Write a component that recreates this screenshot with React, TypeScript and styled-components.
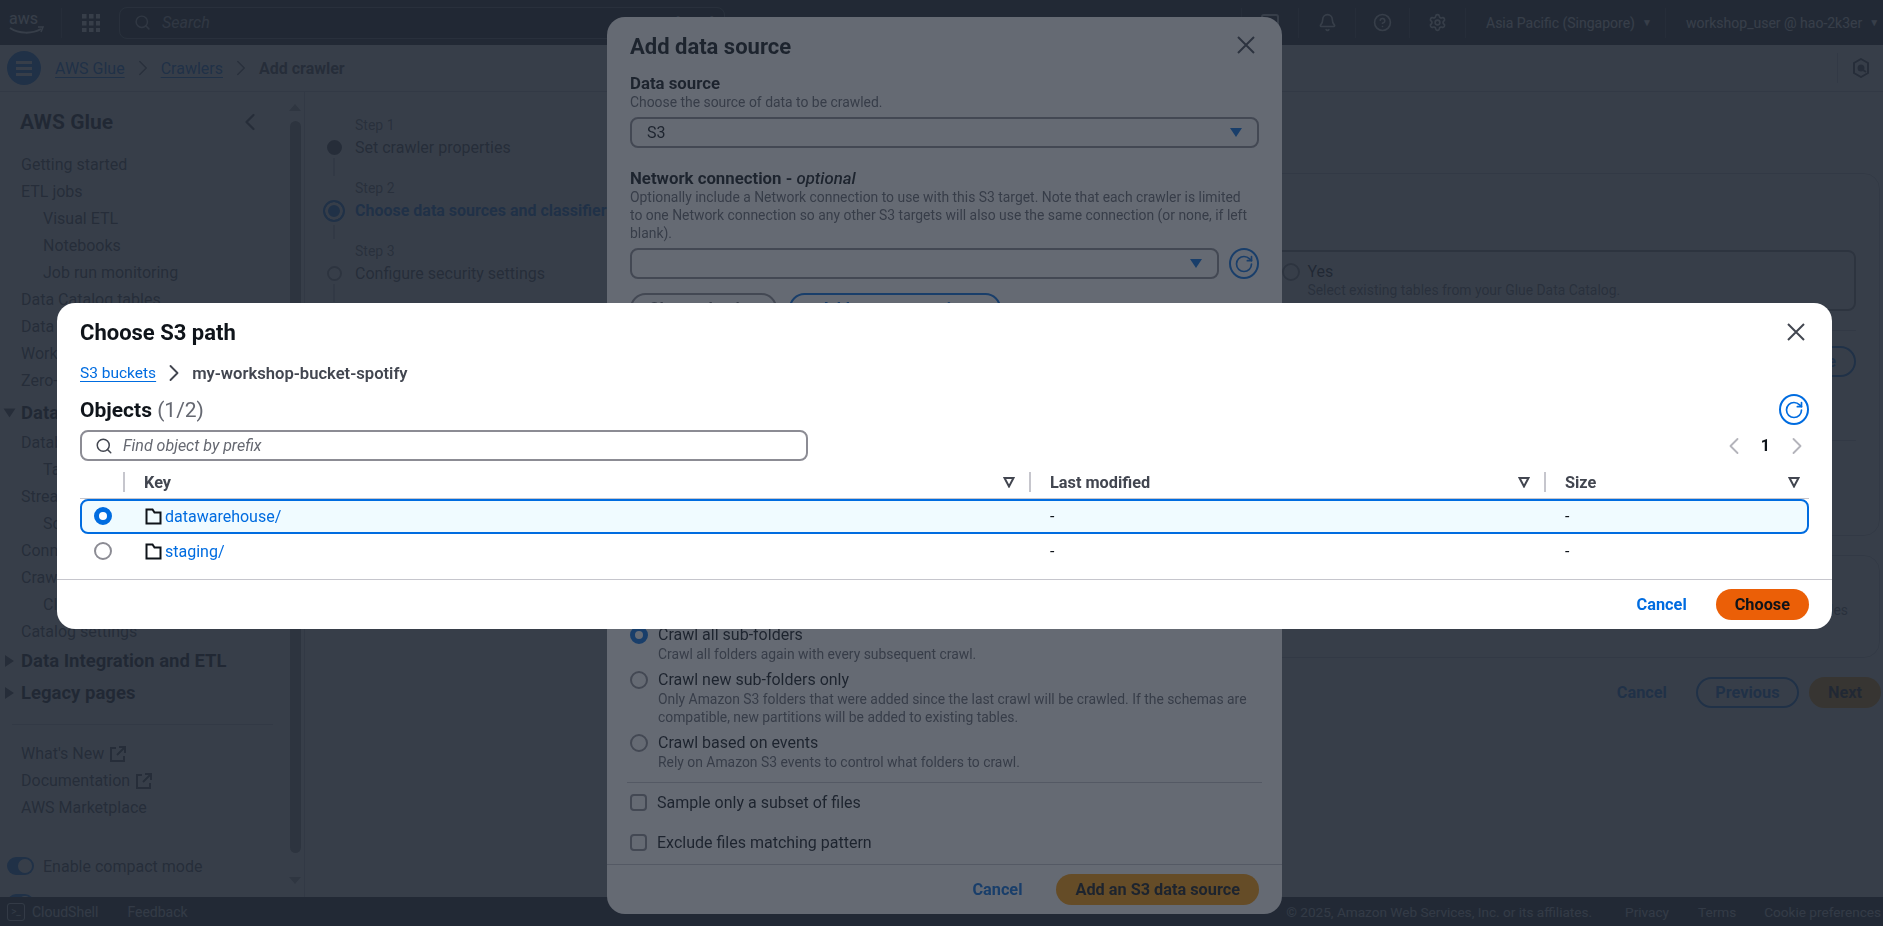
import React from "react";
import styled, { createGlobalStyle } from "styled-components";
import { Bell, ChevronLeft, ChevronRight, CircleHelp, RotateCw, Search, Settings } from "lucide-react";

const FONT = `"Roboto", "Noto Sans", "Liberation Sans", sans-serif`;

const GlobalStyle = createGlobalStyle`
  html, body {
    margin: 0;
    height: 100%;
    overflow: hidden;
    background: #ffffff;
    font-family: ${FONT};
    font-size: 16px;
    color: #0f141a;
  }
  * { box-sizing: border-box; }
`;

/* ---------- page behind the dialogs ---------- */

const Page = styled.div`
  display: flex;
  flex-direction: column;
  height: 100vh;
`;

const TopNav = styled.header`
  display: flex;
  align-items: center;
  flex: 0 0 45px;
  background: #161d26;
  color: #ffffff;
`;

const LogoBox = styled.div`
  flex: 0 0 62px;
  height: 30px;
  padding-left: 9px;
  border-right: 1px solid #424650;
  display: flex;
  align-items: center;
`;

const GridBox = styled.div`
  flex: 0 0 57px;
  display: flex;
  justify-content: center;
`;

const SearchBar = styled.div`
  flex: 0 0 606px;
  height: 32px;
  display: flex;
  align-items: center;
  gap: 11px;
  padding: 0 10px 0 14px;
  border: 1px solid #656871;
  border-radius: 8px;
  background: #0f141a;
  font-style: italic;
  color: #b4b4bb;
`;

const SearchHint = styled.span`
  margin-left: auto;
  font-style: normal;
  font-size: 13px;
`;

const NavSpacer = styled.div`
  flex: 1;
`;

const NavAction = styled.div<{ $width: number }>`
  flex: 0 0 ${(p) => p.$width}px;
  height: 30px;
  display: flex;
  align-items: center;
  justify-content: center;
  border-left: 1px solid #424650;
  color: #ffffff;
`;

const NavMenu = styled(NavAction)`
  justify-content: flex-start;
  gap: 7px;
  padding-left: 20px;
  font-size: 14px;
  white-space: nowrap;
`;

const NavCaret = styled.span`
  font-size: 10px;
`;

const ShellGlyph = styled.span`
  width: 18px;
  height: 18px;
  border: 2px solid #ffffff;
  border-radius: 3px;
`;

const CrumbBar = styled.div`
  flex: 0 0 47px;
  display: flex;
  align-items: center;
  padding: 0 0 0 7px;
  background: #ffffff;
  border-bottom: 1px solid #c6c6cd;
`;

const MenuButton = styled.div`
  width: 34px;
  height: 34px;
  border-radius: 50%;
  background: #006ce0;
  display: flex;
  flex-direction: column;
  align-items: center;
  justify-content: center;
  gap: 3px;
  margin-right: 14px;
`;

const MenuLine = styled.span`
  width: 16px;
  height: 3px;
  background: #ffffff;
`;

const Crumb = styled.span<{ $current?: boolean }>`
  font-weight: ${(p) => (p.$current ? 700 : 400)};
  color: ${(p) => (p.$current ? "#424650" : "#006ce0")};
  text-decoration: ${(p) => (p.$current ? "none" : "underline")};
  text-underline-offset: 3px;
`;

const CrumbChevron = styled(ChevronRight)`
  margin: 0 5px;
  color: #656871;
`;

const PrefBox = styled.div`
  margin-left: auto;
  flex: 0 0 46px;
  height: 30px;
  border-left: 1px solid #c6c6cd;
  display: flex;
  align-items: center;
  justify-content: center;
`;

const Body = styled.div`
  flex: 1;
  min-height: 0;
  display: flex;
  overflow: hidden;
`;

const Sidebar = styled.aside`
  flex: 0 0 305px;
  display: flex;
  border-right: 1px solid #c6c6cd;
  overflow: hidden;
`;

const SideScroll = styled.nav`
  flex: 0 0 289px;
  padding-top: 15px;
`;

const SideHead = styled.div`
  height: 30px;
  margin-bottom: 14px;
  padding: 0 25px 0 20px;
  display: flex;
  align-items: center;
  justify-content: space-between;
  font-size: 21px;
  font-weight: 700;
  color: #0f141a;
`;

const SideItem = styled.div<{ $level?: number }>`
  height: 27px;
  line-height: 27px;
  white-space: nowrap;
  padding-left: ${(p) => 21 + (p.$level ?? 0) * 22}px;
  color: #424650;
`;

const SideSection = styled.div<{ $gap?: number }>`
  height: 32px;
  margin-top: ${(p) => p.$gap ?? 0}px;
  display: flex;
  align-items: center;
  gap: 7px;
  padding-left: 5px;
  font-size: 18.5px;
  font-weight: 700;
  color: #0f141a;
`;

const SectionCaret = styled.span<{ $open?: boolean }>`
  width: 0;
  height: 0;
  border-left: 9px solid #424650;
  border-top: 6px solid transparent;
  border-bottom: 6px solid transparent;
  transform: ${(p) => (p.$open ? "rotate(90deg)" : "none")};
`;

const SideDivider = styled.hr`
  margin: 15px 16px 15px 12px;
  border: 0;
  border-top: 1px solid #c6c6cd;
`;

const SideLink = styled(SideItem)`
  display: flex;
  align-items: center;
  gap: 6px;
`;

const ToggleRow = styled.div<{ $gap?: number }>`
  height: 32px;
  margin-top: ${(p) => p.$gap ?? 0}px;
  display: flex;
  align-items: center;
  gap: 9px;
  padding-left: 7px;
  color: #424650;
`;

const Toggle = styled.span`
  width: 27px;
  height: 18px;
  padding: 2px;
  border-radius: 9px;
  background: #006ce0;
  display: flex;
  justify-content: flex-end;
`;

const ToggleKnob = styled.span`
  width: 14px;
  height: 14px;
  border-radius: 50%;
  background: #ffffff;
`;

const ScrollTrack = styled.div`
  flex: 0 0 11px;
  display: flex;
  flex-direction: column;
  align-items: center;
  padding-top: 12px;
`;

const ScrollArrow = styled.span<{ $down?: boolean }>`
  width: 0;
  height: 0;
  border-left: 6px solid transparent;
  border-right: 6px solid transparent;
  ${(p) => (p.$down ? "border-top: 7px solid #a0a0a0;" : "border-bottom: 7px solid #a0a0a0;")}
`;

const ScrollThumb = styled.span`
  width: 11px;
  height: 732px;
  margin: 10px 0 24px;
  border-radius: 6px;
  background: #8f8f8f;
`;

const Main = styled.main`
  flex: 1;
  min-width: 0;
  display: flex;
`;

const Steps = styled.ol`
  flex: 0 0 322px;
  list-style: none;
  margin: 0;
  padding: 21px 0 0 18px;
`;

const Step = styled.li`
  display: grid;
  grid-template-columns: 22px 1fr;
  grid-template-rows: 23px 40px;
  column-gap: 10px;
`;

const StepLabel = styled.div`
  grid-column: 2;
  padding-top: 1px;
  font-size: 14px;
  color: #656871;
  line-height: 23px;
`;

const StepMarker = styled.div`
  grid-column: 1;
  grid-row: 2;
  display: flex;
  flex-direction: column;
  align-items: center;
`;

const StepDot = styled.span<{ $state: "done" | "active" | "todo" }>`
  flex: none;
  border-radius: 50%;
  width: ${(p) => (p.$state === "active" ? 22 : 15)}px;
  height: ${(p) => (p.$state === "active" ? 22 : 15)}px;
  margin-top: ${(p) => (p.$state === "active" ? 1 : 4)}px;
  background: ${(p) => (p.$state === "done" ? "#424650" : p.$state === "active" ? "#006ce0" : "#ffffff")};
  border: 2px solid ${(p) => (p.$state === "todo" ? "#8c8c94" : p.$state === "active" ? "#006ce0" : "#424650")};
  box-shadow: ${(p) => (p.$state === "active" ? "inset 0 0 0 3px #ffffff" : "none")};
`;

const StepLine = styled.span`
  flex: 1;
  width: 2px;
  margin-top: 3px;
  background: #c6c6cd;
`;

const StepTitle = styled.div<{ $active?: boolean }>`
  grid-column: 2;
  grid-row: 2;
  white-space: nowrap;
  line-height: 23px;
  font-weight: ${(p) => (p.$active ? 700 : 400)};
  color: ${(p) => (p.$active ? "#006ce0" : "#424650")};
`;

const Content = styled.div`
  flex: 1;
  min-width: 0;
  padding: 81px 2px 0 0;
`;

const Card = styled.section<{ $height: number }>`
  height: ${(p) => p.$height}px;
  margin: 0 1px 19px 0;
  padding: 76px 23px 0;
  border: 1px solid #c6c6cd;
  border-radius: 16px;
`;

const TileRow = styled.div`
  display: grid;
  grid-template-columns: 1fr 1fr;
  gap: 16px;
  padding-bottom: 19px;
  border-bottom: 1px solid #c6c6cd;
`;

const Tile = styled.div`
  height: 61px;
  padding: 10px 18px;
  display: grid;
  grid-template-columns: 18px 1fr;
  column-gap: 8px;
  border: 2px solid #8c8c94;
  border-radius: 8px;
`;

const TileRadio = styled.span`
  width: 18px;
  height: 18px;
  margin-top: 1px;
  border-radius: 50%;
  border: 2px solid #8c8c94;
`;

const TileHint = styled.div`
  grid-column: 2;
  font-size: 13.9px;
  color: #656871;
`;

const SourceRow = styled.div`
  display: flex;
  justify-content: flex-end;
  padding: 15px 0 63px;
  border-bottom: 1px solid #c6c6cd;
`;

const OutlineButton = styled.button<{ $muted?: boolean }>`
  height: 31px;
  padding: 0 18px;
  border: 2px solid ${(p) => (p.$muted ? "#8c8c94" : "#006ce0")};
  border-radius: 16px;
  background: #ffffff;
  color: ${(p) => (p.$muted ? "#656871" : "#006ce0")};
  font: 700 16.3px ${FONT};
  white-space: nowrap;
`;

const CardNote = styled.p`
  margin: -30px 0 0;
  font-size: 13.9px;
  color: #656871;
  text-align: right;
  padding-right: 8px;
`;

const Actions = styled.div`
  display: flex;
  justify-content: flex-end;
  align-items: center;
  margin-top: 19px;
`;

const PrevButton = styled(OutlineButton)`
  width: 103px;
  margin: 0 10px 0 29px;
  padding: 0;
`;

const LinkButton = styled.button`
  border: 0;
  background: none;
  padding: 0;
  font: 700 16.3px ${FONT};
  color: #006ce0;
`;

const SolidButton = styled.button<{ $color: string }>`
  height: 31px;
  padding: 0 19px;
  border: 0;
  border-radius: 16px;
  background: ${(p) => p.$color};
  color: #0f141a;
  font: 700 16.3px ${FONT};
`;

const Footer = styled.footer`
  flex: 0 0 29px;
  display: flex;
  align-items: center;
  padding: 0 2px 0 7px;
  background: #161d26;
  color: #d1d5db;
  font-size: 14px;
`;

const ShellBox = styled.span`
  width: 18px;
  height: 18px;
  border: 1px solid #d1d5db;
  border-radius: 3px;
  display: flex;
  align-items: center;
  justify-content: center;
  font-size: 10px;
  margin-right: 7px;
`;

const FooterLink = styled.span<{ $gap: number }>`
  margin-left: ${(p) => p.$gap}px;
  white-space: nowrap;
`;

const FooterLegal = styled(FooterLink)`
  font-size: 13.6px;
`;

/* ---------- dialogs ---------- */

const Backdrop = styled.div<{ $layer: number }>`
  position: fixed;
  inset: 0;
  z-index: ${(p) => p.$layer};
  background: rgba(35, 43, 55, 0.7);
`;

const Dialog = styled.div<{ $layer: number; $left: number; $top: number; $width: number; $height: number }>`
  position: fixed;
  z-index: ${(p) => p.$layer};
  left: ${(p) => p.$left}px;
  top: ${(p) => p.$top}px;
  width: ${(p) => p.$width}px;
  height: ${(p) => p.$height}px;
  background: #ffffff;
  border-radius: 18px;
  display: flex;
  flex-direction: column;
  overflow: hidden;
`;

const DialogHead = styled.div<{ $height: number }>`
  flex: 0 0 ${(p) => p.$height}px;
  display: flex;
  align-items: center;
  justify-content: space-between;
  padding: 0 27px 0 23px;
`;

const DialogTitle = styled.h2`
  margin: 2px 0 0;
  font-size: 22px;
  font-weight: 700;
  color: #0f141a;
`;

const CloseIcon = () => (
  <svg width="18" height="18" viewBox="0 0 18 18" fill="none" stroke="#424650" strokeWidth="2">
    <path d="M1 1l16 16M17 1L1 17" />
  </svg>
);

const AddBody = styled.div`
  flex: 1;
  min-height: 0;
  padding: 0 23px;
  display: flex;
  flex-direction: column;
`;

const FieldLabel = styled.label<{ $top?: number }>`
  display: block;
  margin-top: ${(p) => p.$top ?? 0}px;
  font-size: 16.8px;
  font-weight: 700;
  line-height: 20px;
  color: #0f141a;
`;

const Optional = styled.i`
  font-weight: 500;
`;

const FieldHint = styled.div`
  font-size: 13.9px;
  line-height: 18px;
  color: #656871;
`;

const NetworkHint = styled(FieldHint)`
  padding-right: 7px;
`;

const FieldRow = styled.div`
  display: flex;
  gap: 10px;
  margin-top: 6px;
`;

const SelectBox = styled.div`
  flex: 1;
  height: 31px;
  padding: 0 15px;
  display: flex;
  align-items: center;
  justify-content: space-between;
  border: 2px solid #8c8c94;
  border-radius: 8px;
  color: #0f141a;
`;

const SelectCaret = styled.span`
  width: 0;
  height: 0;
  border-top: 9px solid #006ce0;
  border-left: 6px solid transparent;
  border-right: 6px solid transparent;
`;

const RefreshButton = styled.button`
  flex: 0 0 30px;
  height: 31px;
  padding: 0;
  border: 2px solid #006ce0;
  border-radius: 50%;
  background: #ffffff;
  color: #006ce0;
  display: flex;
  align-items: center;
  justify-content: center;
`;

const ConnButtons = styled.div`
  display: flex;
  gap: 12px;
  margin-top: 14px;
`;

const ClearButton = styled(OutlineButton)`
  width: 147px;
  padding: 0;
`;

const ConnectButton = styled(OutlineButton)`
  width: 212px;
  padding: 0;
`;

const HiddenFields = styled.div`
  flex: 0 0 301px;
  padding-top: 20px;
`;

const RadioRow = styled.div<{ $height: number }>`
  flex: 0 0 ${(p) => p.$height}px;
  display: grid;
  grid-template-columns: 19px 1fr;
  grid-auto-rows: min-content;
  column-gap: 9px;
`;

const Radio = styled.span<{ $on?: boolean }>`
  width: 18px;
  height: 18px;
  margin-top: 1px;
  border-radius: 50%;
  background: #ffffff;
  border: ${(p) => (p.$on ? "5px solid #006ce0" : "2px solid #8c8c94")};
`;

const RadioText = styled.div`
  line-height: 20px;
  color: #0f141a;
`;

const RadioHint = styled(FieldHint)`
  grid-column: 2;
`;

const Rule = styled.hr`
  flex: none;
  width: calc(100% + 6px);
  margin: 9px -3px 0;
  border: 0;
  border-top: 1px solid #c6c6cd;
`;

const CheckRow = styled.div<{ $top: number }>`
  display: flex;
  align-items: center;
  gap: 10px;
  margin-top: ${(p) => p.$top}px;
  flex: 0 0 20px;
  color: #0f141a;
`;

const CheckBox = styled.span`
  width: 17px;
  height: 17px;
  border: 2px solid #8c8c94;
  border-radius: 4px;
`;

const DialogFoot = styled.div<{ $gap: number }>`
  flex: 0 0 50px;
  display: flex;
  align-items: center;
  justify-content: flex-end;
  gap: ${(p) => p.$gap}px;
  padding: 0 23px;
  border-top: 1px solid #c6c6cd;
`;

const PathBody = styled.div`
  flex: 1;
  padding: 0 23px;
  min-height: 0;
`;

const PathCrumbs = styled.div`
  display: flex;
  align-items: center;
  height: 26px;
  font-size: 15.5px;
`;

const PathChevron = styled(ChevronRight)`
  margin: 0 4px;
  color: #424650;
`;

const CrumbLink = styled.a`
  color: #006ce0;
  text-decoration: underline;
  text-underline-offset: 3px;
`;

const CrumbNow = styled.span`
  color: #424650;
  font-size: 16.6px;
  font-weight: 600;
`;

const ObjectsHead = styled.div`
  display: flex;
  align-items: center;
  justify-content: space-between;
  height: 31px;
  margin-top: 8px;
`;

const ObjectsTitle = styled.h3`
  margin: 0;
  font-size: 21px;
  font-weight: 700;
  color: #0f141a;
`;

const Count = styled.span`
  font-weight: 400;
  color: #656871;
`;

const FilterRow = styled.div`
  display: flex;
  align-items: center;
  justify-content: space-between;
  margin-top: 5px;
`;

const FilterInput = styled.div`
  width: 728px;
  height: 31px;
  display: flex;
  align-items: center;
  gap: 10px;
  padding-left: 13px;
  border: 2px solid #8c8c94;
  border-radius: 8px;
  font-style: italic;
  color: #656871;
`;

const Pager = styled.div`
  display: flex;
  align-items: center;
  gap: 13px;
  margin-right: -2px;
  font-weight: 700;
  color: #0f141a;
`;

const TableHead = styled.div`
  display: grid;
  grid-template-columns: 43px 906px 515px 1fr;
  height: 28px;
  margin-top: 10px;
  border-bottom: 1px solid #c6c6cd;
`;

const HeadCell = styled.div<{ $rule?: boolean }>`
  height: 20px;
  margin-top: 1px;
  padding: 0 14px 0 19px;
  display: flex;
  align-items: center;
  justify-content: space-between;
  border-left: ${(p) => (p.$rule ? "2px solid #c6c6cd" : "0")};
  font-size: 16.3px;
  font-weight: 700;
  color: #424650;

  &:last-child {
    padding-right: 9px;
  }
`;

const SortIcon = () => (
  <svg width="12" height="12" viewBox="0 0 12 12" fill="none" stroke="#424650" strokeWidth="2">
    <path d="M1.5 2h9L6 10.5z" />
  </svg>
);

const Row = styled.div<{ $selected?: boolean }>`
  display: grid;
  grid-template-columns: 43px 906px 515px 1fr;
  align-items: center;
  height: 35px;
  border: 2px solid ${(p) => (p.$selected ? "#006ce0" : "transparent")};
  border-radius: 8px;
  background: ${(p) => (p.$selected ? "#f0fbff" : "#ffffff")};
  color: #0f141a;
`;

const RowRadio = styled(Radio)`
  margin: -2px 0 0 12px;
`;

const KeyCell = styled.div`
  display: flex;
  align-items: center;
  gap: 3px;
  padding-left: 20px;
`;

const KeyLink = styled.a`
  color: #006ce0;
`;

const ValueCell = styled.div`
  padding-left: 19px;
`;

const FolderIcon = () => (
  <svg width="17" height="17" viewBox="0 0 17 17" fill="none" stroke="#0f141a" strokeWidth="2">
    <path d="M1.5 15.5V1.5h6l2 3h6v11z" />
  </svg>
);

const ExternalIcon = () => (
  <svg width="16" height="16" viewBox="0 0 16 16" fill="none" stroke="#424650" strokeWidth="2">
    <path d="M6 2H1v13h13v-5M9 1h6v6M15 1L7 9" />
  </svg>
);

const AwsLogo = () => (
  <svg width="36" height="26" viewBox="0 0 36 26">
    <text x="0" y="14" fontFamily="Roboto, sans-serif" fontSize="16" fill="#ffffff">
      aws
    </text>
    <path d="M1 18c9 6 22 6 31 1" fill="none" stroke="#ffffff" strokeWidth="2" />
    <path d="M29 17l5 0-2 5" fill="none" stroke="#ffffff" strokeWidth="1.5" />
  </svg>
);

const GridIcon = () => (
  <svg width="18" height="18" viewBox="0 0 18 18" fill="#ffffff">
    {[0, 7, 14].flatMap((y) => [0, 7, 14].map((x) => <rect key={`${x}-${y}`} x={x} y={y} width="4.5" height="4.5" />))}
  </svg>
);

const PrefIcon = () => (
  <svg width="16" height="20" viewBox="0 0 16 20" fill="none" stroke="#424650" strokeWidth="2">
    <path d="M8 1l7 4v10l-7 4-7-4V5z" />
    <circle cx="8" cy="10" r="2.5" fill="#424650" />
    <path d="M10 12l3 2" />
  </svg>
);

const mainNav: Array<[string, number]> = [
  ["Getting started", 0],
  ["ETL jobs", 0],
  ["Visual ETL", 1],
  ["Notebooks", 1],
  ["Job run monitoring", 1],
  ["Data Catalog tables", 0],
  ["Data connections", 0],
  ["Workflows (orchestration)", 0],
  ["Zero-ETL integrations", 0],
];

const catalogNav: Array<[string, number]> = [
  ["Databases", 0],
  ["Tables", 1],
  ["Stream schema registries", 0],
  ["Schemas", 1],
  ["Connections", 0],
  ["Crawlers", 0],
  ["Classifiers", 1],
  ["Catalog settings", 0],
];

const App = () => {
  return (
    <>
      <GlobalStyle />
      <Page>
        <TopNav>
          <LogoBox>
            <AwsLogo />
          </LogoBox>
          <GridBox>
            <GridIcon />
          </GridBox>
          <SearchBar>
            <Search size={17} />
            Search
            <SearchHint>[Alt+S]</SearchHint>
          </SearchBar>
          <NavSpacer />
          <NavAction $width={57}>
            <ShellGlyph />
          </NavAction>
          <NavAction $width={57}>
            <Bell size={19} />
          </NavAction>
          <NavAction $width={54}>
            <CircleHelp size={19} />
          </NavAction>
          <NavAction $width={56}>
            <Settings size={19} />
          </NavAction>
          <NavMenu $width={200}>
            Asia Pacific (Singapore) <NavCaret>▼</NavCaret>
          </NavMenu>
          <NavMenu $width={218}>
            workshop_user @ hao-2k3er <NavCaret>▼</NavCaret>
          </NavMenu>
        </TopNav>

        <CrumbBar>
          <MenuButton>
            <MenuLine />
            <MenuLine />
            <MenuLine />
          </MenuButton>
          <Crumb>AWS Glue</Crumb>
          <CrumbChevron size={26} strokeWidth={1.5} />
          <Crumb>Crawlers</Crumb>
          <CrumbChevron size={26} strokeWidth={1.5} />
          <Crumb $current>Add crawler</Crumb>
          <PrefBox>
            <PrefIcon />
          </PrefBox>
        </CrumbBar>

        <Body>
          <Sidebar>
            <SideScroll>
              <SideHead>
                AWS Glue
                <ChevronLeft size={28} color="#424650" />
              </SideHead>
              {mainNav.map(([label, level]) => (
                <SideItem key={label} $level={level}>
                  {label}
                </SideItem>
              ))}
              <SideSection $gap={3}>
                <SectionCaret $open />
                Data Catalog
              </SideSection>
              {catalogNav.map(([label, level]) => (
                <SideItem key={label} $level={level}>
                  {label}
                </SideItem>
              ))}
              <SideSection>
                <SectionCaret />
                Data Integration and ETL
              </SideSection>
              <SideSection>
                <SectionCaret />
                Legacy pages
              </SideSection>
              <SideDivider />
              <SideLink>
                What's New <ExternalIcon />
              </SideLink>
              <SideLink>
                Documentation <ExternalIcon />
              </SideLink>
              <SideItem>AWS Marketplace</SideItem>
              <ToggleRow $gap={29}>
                <Toggle>
                  <ToggleKnob />
                </Toggle>
                Enable compact mode
              </ToggleRow>
              <ToggleRow $gap={5}>
                <Toggle>
                  <ToggleKnob />
                </Toggle>
                Enable beta navigation
              </ToggleRow>
            </SideScroll>
            <ScrollTrack>
              <ScrollArrow />
              <ScrollThumb />
              <ScrollArrow $down />
            </ScrollTrack>
          </Sidebar>

          <Main>
            <Steps>
              <Step>
                <StepLabel>Step 1</StepLabel>
                <StepMarker>
                  <StepDot $state="done" />
                  <StepLine />
                </StepMarker>
                <StepTitle>Set crawler properties</StepTitle>
              </Step>
              <Step>
                <StepLabel>Step 2</StepLabel>
                <StepMarker>
                  <StepDot $state="active" />
                  <StepLine />
                </StepMarker>
                <StepTitle $active>Choose data sources and classifiers</StepTitle>
              </Step>
              <Step>
                <StepLabel>Step 3</StepLabel>
                <StepMarker>
                  <StepDot $state="todo" />
                  <StepLine />
                </StepMarker>
                <StepTitle>Configure security settings</StepTitle>
              </Step>
              <Step>
                <StepLabel>Step 4</StepLabel>
                <StepMarker>
                  <StepDot $state="todo" />
                </StepMarker>
                <StepTitle>Set output and scheduling</StepTitle>
              </Step>
            </Steps>
            <Content>
              <Card $height={363}>
                <TileRow>
                  <Tile>
                    <TileRadio />
                    Not yet
                    <TileHint>Select one or more data sources to be crawled.</TileHint>
                  </Tile>
                  <Tile>
                    <TileRadio />
                    Yes
                    <TileHint>Select existing tables from your Glue Data Catalog.</TileHint>
                  </Tile>
                </TileRow>
                <SourceRow>
                  <OutlineButton>Add a data source</OutlineButton>
                </SourceRow>
              </Card>
              <Card $height={103}>
                <CardNote>Custom classifiers generate schemas for your data tables and files</CardNote>
              </Card>
              <Actions>
                <LinkButton>Cancel</LinkButton>
                <PrevButton>Previous</PrevButton>
                <SolidButton $color="#ff9900">Next</SolidButton>
              </Actions>
            </Content>
          </Main>
        </Body>

        <Footer>
          <ShellBox>&gt;_</ShellBox>
          CloudShell
          <FooterLink $gap={29}>Feedback</FooterLink>
          <NavSpacer />
          <FooterLegal $gap={0}>© 2025, Amazon Web Services, Inc. or its affiliates.</FooterLegal>
          <FooterLegal $gap={33}>Privacy</FooterLegal>
          <FooterLegal $gap={29}>Terms</FooterLegal>
          <FooterLegal $gap={28}>Cookie preferences</FooterLegal>
        </Footer>
      </Page>

      <Backdrop $layer={10} />
      <Dialog $layer={20} $left={607} $top={17} $width={675} $height={897}>
        <DialogHead $height={56}>
          <DialogTitle>Add data source</DialogTitle>
          <CloseIcon />
        </DialogHead>
        <AddBody>
          <FieldLabel>Data source</FieldLabel>
          <FieldHint>Choose the source of data to be crawled.</FieldHint>
          <FieldRow>
            <SelectBox>
              S3
              <SelectCaret />
            </SelectBox>
          </FieldRow>
          <FieldLabel $top={20}>
            Network connection - <Optional>optional</Optional>
          </FieldLabel>
          <NetworkHint>
            Optionally include a Network connection to use with this S3 target. Note that each crawler is limited to
            one Network connection so any other S3 targets will also use the same connection (or none, if left blank).
          </NetworkHint>
          <FieldRow>
            <SelectBox>
              <span />
              <SelectCaret />
            </SelectBox>
            <RefreshButton>
              <RotateCw size={20} />
            </RefreshButton>
          </FieldRow>
          <ConnButtons>
            <ClearButton $muted>Clear selection</ClearButton>
            <ConnectButton>Add new connection</ConnectButton>
          </ConnButtons>
          <HiddenFields>
            <FieldLabel>Location of S3 data</FieldLabel>
            <FieldLabel $top={20}>S3 path</FieldLabel>
            <FieldLabel $top={20}>Subsequent crawler runs</FieldLabel>
          </HiddenFields>
          <RadioRow $height={45}>
            <Radio $on />
            <RadioText>Crawl all sub-folders</RadioText>
            <RadioHint>Crawl all folders again with every subsequent crawl.</RadioHint>
          </RadioRow>
          <RadioRow $height={63}>
            <Radio />
            <RadioText>Crawl new sub-folders only</RadioText>
            <RadioHint>
              Only Amazon S3 folders that were added since the last crawl will be crawled. If the schemas are
              compatible, new partitions will be added to existing tables.
            </RadioHint>
          </RadioRow>
          <RadioRow $height={40}>
            <Radio />
            <RadioText>Crawl based on events</RadioText>
            <RadioHint>Rely on Amazon S3 events to control what folders to crawl.</RadioHint>
          </RadioRow>
          <Rule />
          <CheckRow $top={9}>
            <CheckBox />
            Sample only a subset of files
          </CheckRow>
          <CheckRow $top={20}>
            <CheckBox />
            Exclude files matching pattern
          </CheckRow>
        </AddBody>
        <DialogFoot $gap={34}>
          <LinkButton>Cancel</LinkButton>
          <SolidButton $color="#ff9900">Add an S3 data source</SolidButton>
        </DialogFoot>
      </Dialog>

      <Backdrop $layer={30} />
      <Dialog $layer={40} $left={57} $top={303} $width={1775} $height={326}>
        <DialogHead $height={57}>
          <DialogTitle>Choose S3 path</DialogTitle>
          <CloseIcon />
        </DialogHead>
        <PathBody>
          <PathCrumbs>
            <CrumbLink>S3 buckets</CrumbLink>
            <PathChevron size={28} strokeWidth={1.6} />
            <CrumbNow>my-workshop-bucket-spotify</CrumbNow>
          </PathCrumbs>
          <ObjectsHead>
            <ObjectsTitle>
              Objects <Count>(1/2)</Count>
            </ObjectsTitle>
            <RefreshButton>
              <RotateCw size={20} />
            </RefreshButton>
          </ObjectsHead>
          <FilterRow>
            <FilterInput>
              <Search size={18} color="#424650" />
              Find object by prefix
            </FilterInput>
            <Pager>
              <ChevronLeft size={28} strokeWidth={1.6} color="#b4b4bb" />
              1
              <ChevronRight size={28} strokeWidth={1.6} color="#b4b4bb" />
            </Pager>
          </FilterRow>
          <TableHead>
            <span />
            <HeadCell $rule>
              Key
              <SortIcon />
            </HeadCell>
            <HeadCell $rule>
              Last modified
              <SortIcon />
            </HeadCell>
            <HeadCell $rule>
              Size
              <SortIcon />
            </HeadCell>
          </TableHead>
          <Row $selected>
            <RowRadio $on />
            <KeyCell>
              <FolderIcon />
              <KeyLink>datawarehouse/</KeyLink>
            </KeyCell>
            <ValueCell>-</ValueCell>
            <ValueCell>-</ValueCell>
          </Row>
          <Row>
            <RowRadio />
            <KeyCell>
              <FolderIcon />
              <KeyLink>staging/</KeyLink>
            </KeyCell>
            <ValueCell>-</ValueCell>
            <ValueCell>-</ValueCell>
          </Row>
        </PathBody>
        <DialogFoot $gap={29}>
          <LinkButton>Cancel</LinkButton>
          <SolidButton $color="#eb5f07">Choose</SolidButton>
        </DialogFoot>
      </Dialog>
    </>
  );
};

export default App;
